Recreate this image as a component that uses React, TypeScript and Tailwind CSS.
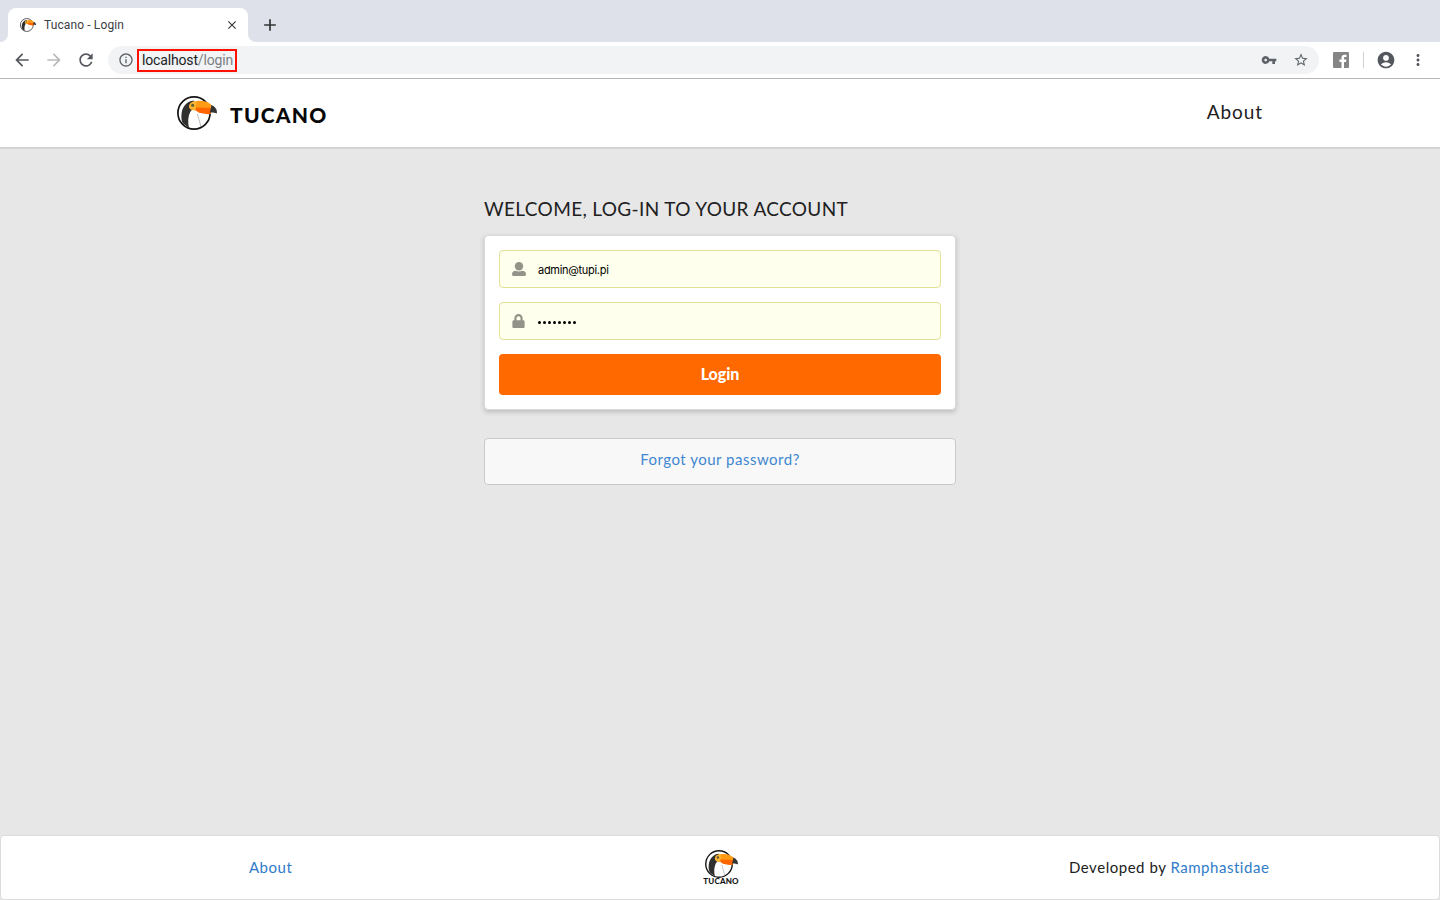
import type { ReactNode } from "react";
import {
  MdAccountCircle,
  MdAdd,
  MdArrowBack,
  MdArrowForward,
  MdClose,
  MdInfoOutline,
  MdMoreVert,
  MdRefresh,
  MdStarBorder,
  MdVpnKey,
} from "react-icons/md";
import { FaLock } from "react-icons/fa";

function Toucan({ className }: { className: string }) {
  return (
    <svg viewBox="0 0 40 34" className={className} aria-hidden="true">
      <circle cx="17" cy="17" r="16.1" fill="#fff" stroke="#151515" strokeWidth="1.7" />
      <path d="M17 4.5C9.5 5 5.5 11 4.6 17C4 22 4.5 25 6 27.5L12 31.8C10.6 26 11 20.5 13.2 16L18 10Z" fill="#30302e" />
      <path d="M12 10.5C12 7 15.5 5 20 5L24 5.5L21 14.3C17 15.2 12 14 12 10.5Z" fill="#fcb533" />
      <path d="M20 5C25 4.2 31 5.4 35 9.5L33.5 15L19 14.4C19.3 11 18.8 7.5 20 5Z" fill="#ff9a14" />
      <path d="M18.8 11.5L33.5 12L34 18C29 18.4 23 18 18.7 14.6Z" fill="#ff6500" />
      <path d="M34.4 9C38.5 10.8 40.5 13.5 39.8 17.6C37.5 16.3 35.3 16.5 32.6 16.5C33.7 14 34 11 34.4 9Z" fill="#343434" />
      <circle cx="15.6" cy="9.2" r="1.5" fill="#5c5a34" />
      <path d="M20.5 18C21 22 23 25 23.7 30.5" fill="none" stroke="#777" strokeWidth=".5" />
    </svg>
  );
}

function UserIcon() {
  return (
    <svg viewBox="0 0 14 14" className="h-3.5 w-3.5 fill-[#93938a]" aria-hidden="true">
      <circle cx="7" cy="4.2" r="4.2" />
      <path d="M0 12.6C0 10 1.6 8.8 3.6 8.8C5.5 9.8 8.5 9.8 10.4 8.8C12.4 8.8 14 10 14 12.6Q14 14 12.7 14H1.3Q0 14 0 12.6Z" />
    </svg>
  );
}

function Field({ icon, children }: { icon: ReactNode; children: ReactNode }) {
  return (
    <div className="flex h-[38px] items-center rounded border border-[#e3e196] bg-[#feffec] pl-3">
      <span className="flex w-[26px]">{icon}</span>
      {children}
    </div>
  );
}

function BrowserChrome() {
  return (
    <>
      <div className="flex h-[42px] shrink-0 bg-[#dee1e9] pt-2">
        <div className="flex w-2 bg-white">
          <span className="w-full rounded-br-lg bg-[#dee1e9]" />
        </div>
        <div className="flex w-60 items-center rounded-t-lg bg-white pr-[9px] pl-3">
          <Toucan className="h-4 w-4" />
          <span className="ml-2 flex-1 font-['Roboto',sans-serif] text-[12px] tracking-[0.12px] text-[#3c4043]">Tucano - Login</span>
          <MdClose className="h-3.5 w-3.5 text-[#35383c]" />
        </div>
        <div className="flex w-2 bg-white">
          <span className="w-full rounded-bl-lg bg-[#dee1e9]" />
        </div>
        <MdAdd className="mt-[7px] ml-1 h-5 w-5 text-[#333]" />
      </div>
      <div className="flex h-[37px] shrink-0 items-center border-b border-[#b6b6b6] bg-white pl-3">
        <MdArrowBack className="h-5 w-5 text-[#54575d]" />
        <MdArrowForward className="ml-3 h-5 w-5 text-[#bababc]" />
        <MdRefresh className="ml-3 h-5 w-5 text-[#54575d]" />
        <div className="ml-3 flex h-7 w-[1211px] items-center rounded-full bg-[#f1f3f4] pr-[10px] pl-[10px]">
          <MdInfoOutline className="h-4 w-4 text-[#5f6368]" />
          <span className="ml-[3px] flex h-[23px] w-[100px] items-center border-[2.5px] border-[#ff1000] pl-[3px] font-['Roboto',sans-serif] text-[14px] tracking-[-0.16px] whitespace-nowrap text-[#202124]">
            localhost<span className="text-[#7c8085]">/login</span>
          </span>
          <MdVpnKey className="ml-auto h-4 w-4 text-[#5f6368]" />
          <MdStarBorder className="ml-4 h-4 w-4 text-[#5f6368]" />
        </div>
        <svg viewBox="0 0 16 16" className="ml-[14px] h-4 w-4" aria-hidden="true">
          <rect width="16" height="16" rx="1" fill="#858585" />
          <path d="M11 16V10H13L13.4 7.6H11V6.2C11 5.4 11.4 5 12.2 5H13.5V2.8H11.7C9.6 2.8 8.5 4 8.5 6V7.6H6.5V10H8.5V16Z" fill="#fff" />
        </svg>
        <span className="ml-[14px] h-4 w-px bg-[#d0d1d3]" />
        <MdAccountCircle className="ml-3 h-5 w-5 text-[#54575d]" />
        <MdMoreVert className="ml-[13px] h-[18px] w-[18px] text-[#54575d]" />
      </div>
    </>
  );
}

export default function App() {
  return (
    <div className="flex h-[900px] w-[1440px] flex-col overflow-hidden bg-[#e7e7e7] font-['Lato',sans-serif] text-[#212121]">
      <BrowserChrome />
      <header className="flex h-[70px] shrink-0 items-start justify-between border-b-2 border-[#d4d4d4] bg-white pr-[177px] pl-[177px]">
        <div className="flex pt-[17px]">
          <Toucan className="h-[34px] w-10" />
          <span className="mt-[5px] ml-[13px] text-[21px] leading-[27px] font-black tracking-[1.2px] text-[#080808]">TUCANO</span>
        </div>
        <a className="mt-5 text-[19px] leading-[26px] tracking-[0.9px]">About</a>
      </header>
      <main className="flex flex-1 flex-col items-center">
        <div className="w-[472px] pt-[47px]">
          <h1 className="text-[19px] leading-[26px] tracking-[0.35px] whitespace-nowrap">WELCOME, LOG-IN TO YOUR ACCOUNT</h1>
          <form className="mt-[13px] flex h-[175px] flex-col gap-[14px] rounded border border-[#d9d9d9] bg-white p-[14px] shadow-[0_2px_5px_rgba(34,36,38,0.22)]">
            <Field icon={<UserIcon />}>
              <span className="pt-[3px] font-['Inter',sans-serif] text-[11px] tracking-[-0.3px] text-black">admin@tupi.pi</span>
            </Field>
            <Field icon={<FaLock className="h-3.5 w-[13px] text-[#93938a]" />}>
              <span className="flex gap-[2px] pt-[3px]">
                {Array.from({ length: 8 }, (_, i) => (
                  <span key={i} className="h-[3px] w-[3px] rounded-full bg-black" />
                ))}
              </span>
            </Field>
            <button type="button" className="h-[41px] shrink-0 rounded bg-[#ff6900] pb-px text-[16px] font-black tracking-[-0.05px] text-white">Login</button>
          </form>
          <div className="mt-7 flex h-[47px] items-center justify-center rounded border border-[#c9c9c9] bg-[#f8f8f8] pb-[5px] text-[15px] tracking-[0.5px] text-[#3f87d0]">
            <a>Forgot your password?</a>
          </div>
        </div>
      </main>
      <footer className="flex h-[65px] shrink-0 items-start rounded border border-[#dcdcdc] bg-white text-[15px]">
        <a className="mt-[21px] ml-[248px] w-[454px] leading-5 tracking-[0.5px] text-[#2f7bc9]">About</a>
        <div className="mt-[14px] flex w-9 flex-col items-center">
          <Toucan className="h-[28px] w-[33px]" />
          <span className="-mt-px text-[8px] leading-[8px] font-black tracking-[0.2px] text-[#151515]">TUCANO</span>
        </div>
        <span className="mt-[21px] ml-[330px] leading-5 tracking-[0.53px] whitespace-nowrap">
          Developed by <a className="text-[#2f7bc9]">Ramphastidae</a>
        </span>
      </footer>
    </div>
  );
}
